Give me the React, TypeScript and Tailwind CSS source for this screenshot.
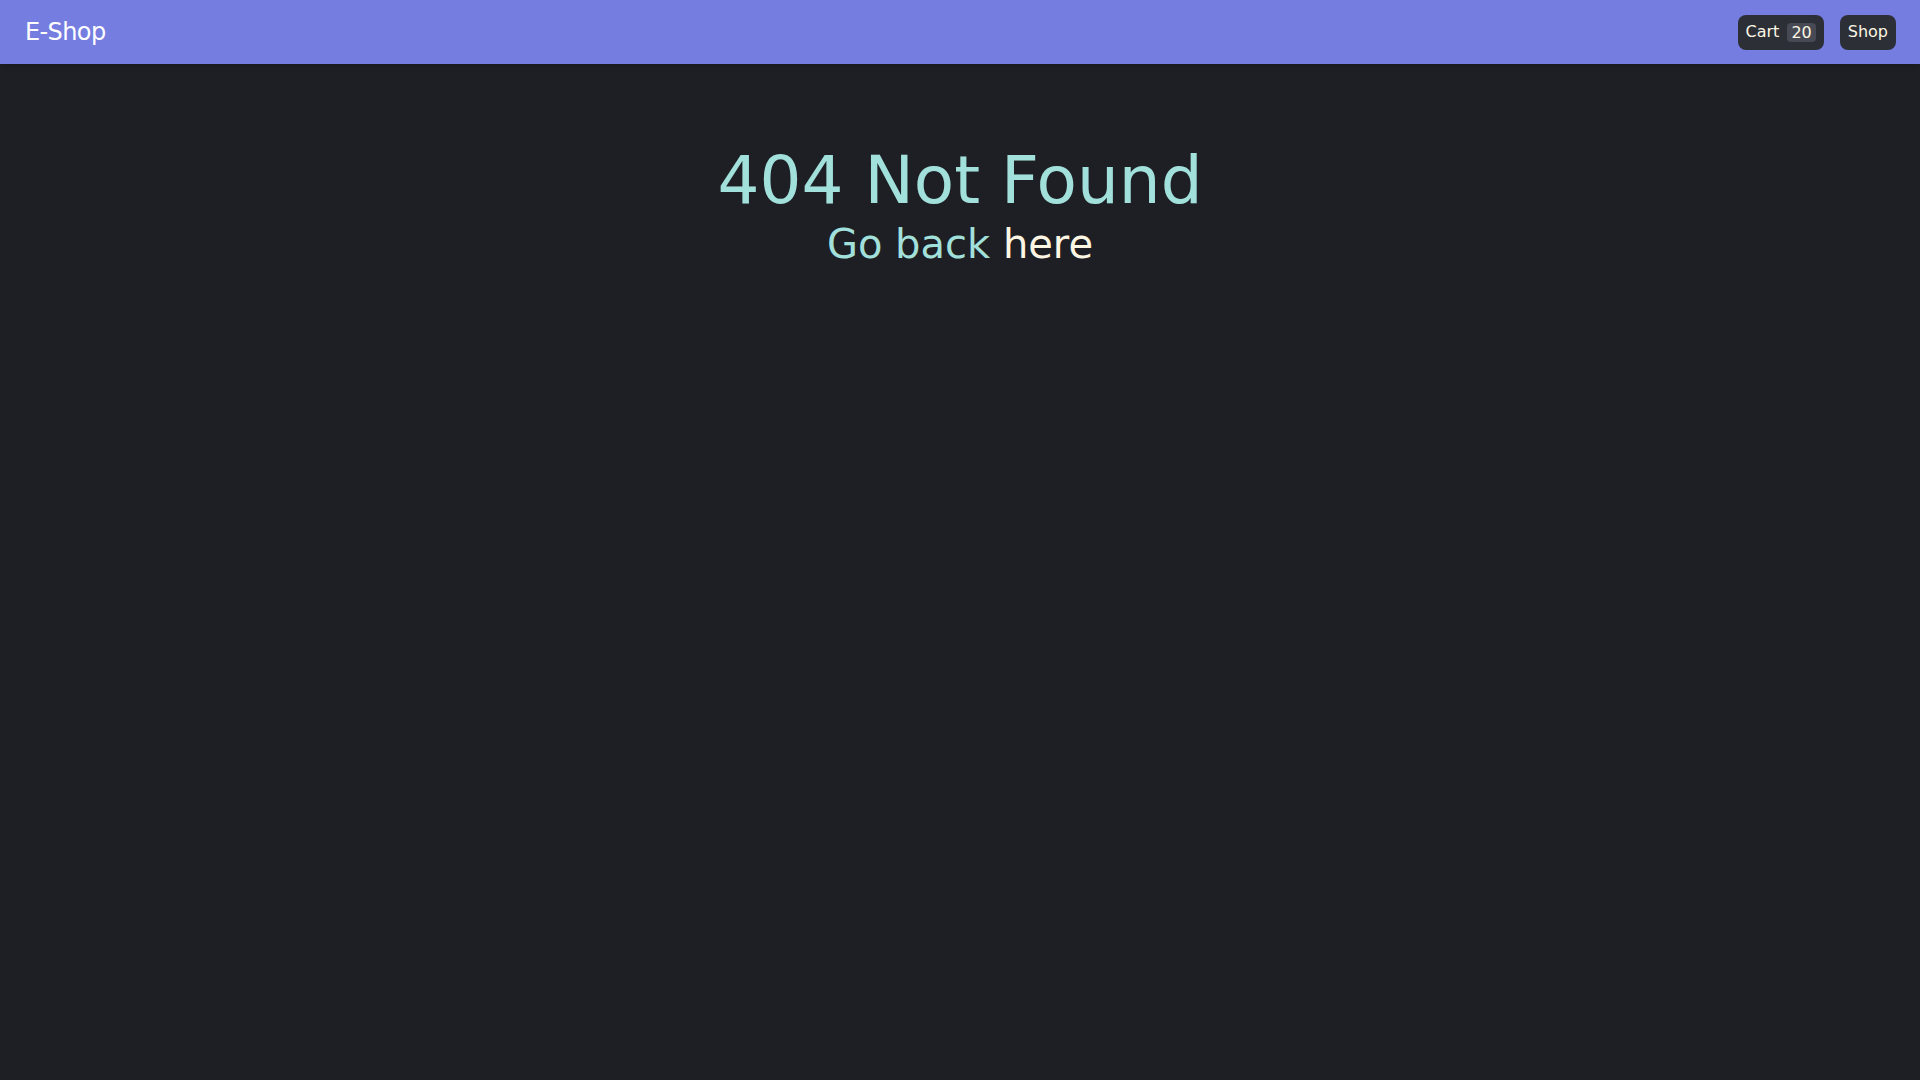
export default function App() {
  return (
    <div className="min-h-screen bg-[#1e1f24] font-['DejaVu_Sans',sans-serif]">
      {/* Navbar */}
      <nav className="h-[64px] bg-[#757de0] flex items-center justify-between pl-[25px] pr-[24px] shadow-md">
        <a href="#" className="text-white text-[24px] tracking-tight">
          E-Shop
        </a>
        <div className="flex items-center gap-4">
          <button className="h-[35px] flex items-center gap-2 px-2 rounded-lg bg-[#2c2f36] text-[#fdf6e3] text-[16px]">
            <span>Cart</span>
            <span className="px-1 rounded bg-[#474a54] leading-[19px]">20</span>
          </button>
          <button className="h-[35px] flex items-center px-2 rounded-lg bg-[#2c2f36] text-[#fdf6e3] text-[16px]">
            Shop
          </button>
        </div>
      </nav>

      {/* Content */}
      <main className="flex flex-col items-center pt-[77px]">
        <h1 className="text-[66px] leading-[80px] text-[#a2e0dc]">404 Not Found</h1>
        <p className="text-[40px] leading-[46px] text-[#a2e0dc]">
          Go back <a href="#" className="text-[#fdf6e3]">here</a>
        </p>
      </main>
    </div>
  );
}
